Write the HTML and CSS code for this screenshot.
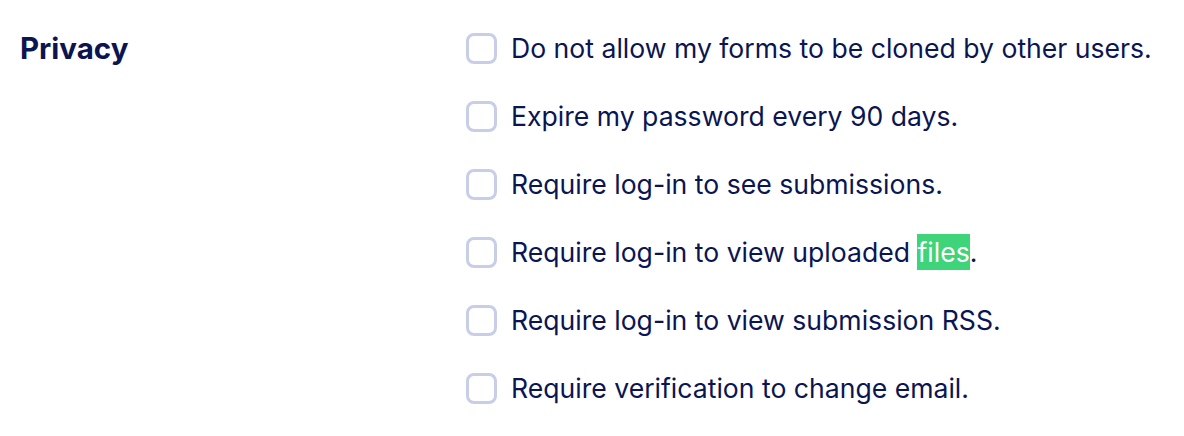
FILE: index.html
```html
<!DOCTYPE html>
<html>
<head>
<meta charset="utf-8">
<link rel="stylesheet" href="styles.css">
</head>
<body>
<section class="settings">
  <h2 class="title">Privacy</h2>
  <ul class="options">
    <li class="option"><span class="box"></span><span class="label">Do not allow my forms to be cloned by other users.</span></li>
    <li class="option"><span class="box"></span><span class="label">Expire my password every 90 days.</span></li>
    <li class="option"><span class="box"></span><span class="label">Require log-in to see submissions.</span></li>
    <li class="option"><span class="box"></span><span class="label">Require log-in to view uploaded <mark class="hl">files</mark>.</span></li>
    <li class="option"><span class="box"></span><span class="label">Require log-in to view submission RSS.</span></li>
    <li class="option"><span class="box"></span><span class="label">Require verification to change email.</span></li>
  </ul>
</section>
</body>
</html>
```
FILE: styles.css
```css
html, body {
  margin: 0;
  padding: 0;
  background: #ffffff;
}
body {
  font-family: "Inter", "Liberation Sans", sans-serif;
  color: #0a1551;
}
.settings {
  display: flex;
  padding: 14px 0 0 20px;
}
.title {
  width: 446px;
  margin: 0;
  font-size: 29.5px;
  font-weight: 700;
  line-height: 68px;
  height: 68px;
}
.options {
  list-style: none;
  margin: 0;
  padding: 0;
  display: flex;
  flex-direction: column;
}
.option {
  height: 68px;
  display: flex;
  align-items: center;
  gap: 14px;
}
.box {
  box-sizing: border-box;
  width: 31px;
  height: 31px;
  border: 3px solid #c8cde8;
  border-radius: 8px;
  background: #fff;
  flex: none;
}
.label {
  font-size: 26.6px;
  line-height: 36px;
}
.hl {
  background: #3dd47a;
  color: #ffffff;
  padding: 2px 0;
}
```
